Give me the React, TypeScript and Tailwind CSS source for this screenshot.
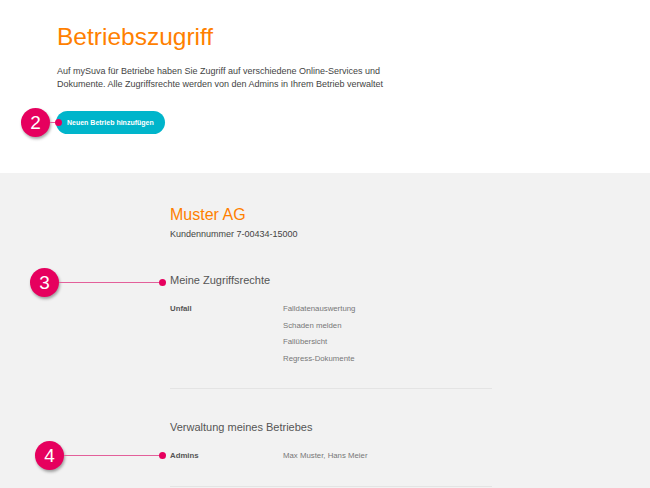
import React from "react";

type MarkerProps = {
  num: string;
  className: string;
  lineClassName: string;
};

// Pink numbered callout with a thin connector line ending in a dot
function Marker({ num, className, lineClassName }: MarkerProps) {
  return (
    <div className={`absolute flex items-center ${className}`}>
      <div className="flex h-[29px] w-[29px] items-center justify-center rounded-full bg-[#e6005e] text-[19px] leading-none text-white shadow-[1px_2px_3px_rgba(0,0,0,0.35)]">
        {num}
      </div>
      <div className={`h-px bg-[#e3609a] ${lineClassName}`}></div>
      <div className="h-[7px] w-[7px] rounded-full bg-[#e6005e]"></div>
    </div>
  );
}

const rights = ["Falldatenauswertung", "Schaden melden", "Fallübersicht", "Regress-Dokumente"];

export default function App() {
  return (
    <div className="relative min-h-[488px] overflow-hidden bg-[#f2f2f2] font-['Liberation_Sans',Arial,sans-serif]">
      {/* Top section */}
      <section className="h-[173px] bg-white pl-[57px] pt-[23px]">
        <h1 className="text-[24.5px] leading-[28px] text-[#ff7f00]">Betriebszugriff</h1>
        <p className="mt-[14px] text-[9px] leading-[13px] text-[#444]">
          Auf mySuva für Betriebe haben Sie Zugriff auf verschiedene Online-Services und
          <br />
          Dokumente. Alle Zugriffsrechte werden von den Admins in Ihrem Betrieb verwaltet
        </p>
        <button className="mt-[20px] -ml-px h-[23px] rounded-full bg-[#00b5cb] px-[11px] text-[7px] font-bold leading-[23px] text-white">
          Neuen Betrieb hinzufügen
        </button>
      </section>

      {/* Company section */}
      <section className="pl-[170px] pt-[32px] pb-4">
        <h2 className="text-[16px] leading-[20px] text-[#ff7f00]">Muster AG</h2>
        <div className="mt-[3px] text-[9px] leading-[12px] text-[#444]">Kundennummer 7-00434-15000</div>

        <h3 className="mt-[33px] text-[11px] leading-[14px] text-[#555]">Meine Zugriffsrechte</h3>
        <div className="mt-[14px] flex text-[7.8px] leading-[16.5px]">
          <div className="w-[113px] font-bold text-[#555]">Unfall</div>
          <ul className="text-[#777]">
            {rights.map((r) => (
              <li key={r}>{r}</li>
            ))}
          </ul>
        </div>
        <div className="mt-[21px] h-px w-[322px] bg-[#e4e4e4]"></div>

        <h3 className="mt-[31px] text-[11px] leading-[14px] text-[#555]">Verwaltung meines Betriebes</h3>
        <div className="mt-[14px] flex text-[7.8px] leading-[16.5px]">
          <div className="w-[113px] font-bold text-[#555]">Admins</div>
          <div className="text-[#777]">Max Muster, Hans Meier</div>
        </div>
        <div className="mt-[21px] h-px w-[322px] bg-[#e4e4e4]"></div>
      </section>

      {/* Annotations */}
      <Marker num="2" className="left-[21px] top-[108px]" lineClassName="w-[5px]" />
      <Marker num="3" className="left-[30px] top-[268px]" lineClassName="w-[100px]" />
      <Marker num="4" className="left-[35px] top-[441px]" lineClassName="w-[95px]" />
    </div>
  );
}
